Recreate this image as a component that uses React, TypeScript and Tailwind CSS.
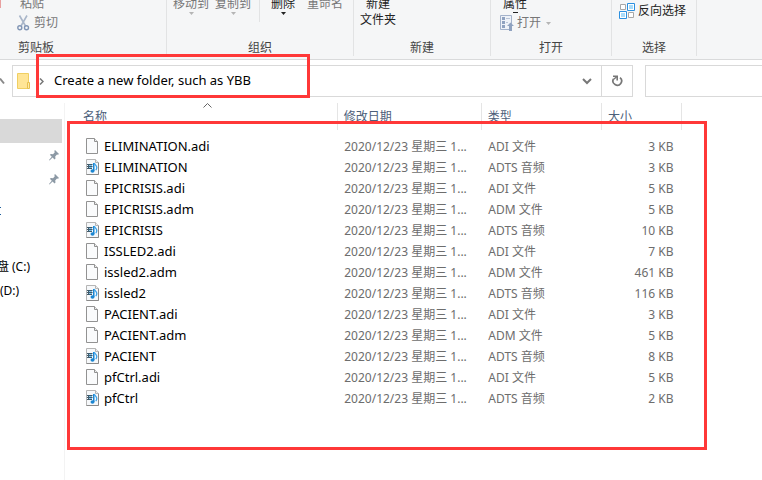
const base = "font-['Noto_Sans','Noto_Sans_CJK_SC',sans-serif]"

interface FileRow {
  name: string
  type: string
  size: string
}

const files: FileRow[] = [
  { name: "ELIMINATION.adi", type: "ADI 文件", size: "3 KB" },
  { name: "ELIMINATION", type: "ADTS 音频", size: "3 KB" },
  { name: "EPICRISIS.adi", type: "ADI 文件", size: "5 KB" },
  { name: "EPICRISIS.adm", type: "ADM 文件", size: "5 KB" },
  { name: "EPICRISIS", type: "ADTS 音频", size: "10 KB" },
  { name: "ISSLED2.adi", type: "ADI 文件", size: "7 KB" },
  { name: "issled2.adm", type: "ADM 文件", size: "461 KB" },
  { name: "issled2", type: "ADTS 音频", size: "116 KB" },
  { name: "PACIENT.adi", type: "ADI 文件", size: "3 KB" },
  { name: "PACIENT.adm", type: "ADM 文件", size: "5 KB" },
  { name: "PACIENT", type: "ADTS 音频", size: "8 KB" },
  { name: "pfCtrl.adi", type: "ADI 文件", size: "5 KB" },
  { name: "pfCtrl", type: "ADTS 音频", size: "2 KB" },
]

function PageIcon() {
  return (
    <svg className="shrink-0" width="14" height="16" viewBox="0 0 14 16" fill="none">
      <path d="M.5.5h8l3 3v12H.5z" fill="#fafbfc" stroke="#929292" />
      <path d="M8.500.5v3h3" fill="#eee" stroke="#929292" />
    </svg>
  )
}

function AudioIcon() {
  return (
    <svg className="shrink-0" width="14" height="16" viewBox="0 0 14 16" fill="none">
      <path d="M.5.5h9l3 3v12H.5z" fill="#f6f8fa" stroke="#b5b5b5" />
      <path d="M12.500 3.500v12H.5" stroke="#8a8a8a" />
      <path d="M9.500.5v3h3" fill="#eee" stroke="#b5b5b5" />
      <path d="M1 5h5.500v1H1zM1 7h5.500v1H1zM1 9h5v1H1zM2 5h1v5H2z" fill="#3f5a6b" />
      <path d="M3 6h3v1H3zM3 8h3v1H3z" fill="#7fc0e8" />
      <path d="M7 4h1.500v8H7z" fill="#1b86d1" />
      <path d="M8.200 4c.4 1.800 2.600 2.400 2.600 4.600 0 1-.4 1.900-1 2.600" stroke="#3ba3ea" strokeWidth="1.300" />
      <ellipse cx="6.500" cy="12" rx="2" ry="1.700" fill="#1b86d1" />
    </svg>
  )
}

function DownArrow({ color }: { color: string }) {
  return (
    <svg width="5" height="3" viewBox="0 0 5 3">
      <path d="M0 0h5L2.500 3z" fill={color} />
    </svg>
  )
}

function ScissorsIcon() {
  return (
    <svg width="13" height="16" viewBox="0 0 13 16" fill="none">
      <path d="M2.500.5 8.500 11M10 .5 4 11" stroke="#a9b6c9" strokeWidth="1.600" />
      <circle cx="2.800" cy="12.800" r="2" stroke="#8095b5" strokeWidth="1.400" />
      <circle cx="9.500" cy="12.800" r="2" stroke="#8095b5" strokeWidth="1.400" />
    </svg>
  )
}

function OpenIcon() {
  return (
    <svg width="14" height="16" viewBox="0 0 14 16" fill="none">
      <path d="M.5.5h11v14H.5z" fill="#eef2f8" stroke="#a3b2cb" />
      <path d="M2 2h3v3H2zM2 6h3v3H2zM2 10h3v3H2z" fill="#8fa2c0" />
      <path d="M6 3.500h4M6 7.500h2" stroke="#b9c5d8" />
      <path d="M10.500 7.500 14 11h-2v5H9v-5H7z" fill="#8fa2c0" />
    </svg>
  )
}

function InvertIcon() {
  return (
    <svg width="16" height="16" viewBox="0 0 16 16" fill="none">
      <path d="M1.500 1.500h5v5h-5zM9.500 9.500h5v5h-5z" fill="#fff" stroke="#a8a8a8" />
      <path d="M8.500.5h7v7h-7zM.5 8.500h7v7h-7z" fill="#fff" stroke="#2b90e0" />
      <path d="M10 2h4v4h-4zM2 10h4v4H2z" fill="#a9dcfa" />
    </svg>
  )
}

function PinIcon() {
  return (
    <svg width="10" height="11" viewBox="0 0 10 11">
      <path d="m6 0 4 4-1 .8-1-.2-1.800 2 .3 2L5.500 9.500 3.600 7.500.5 10.500 0 10 2.800 6.700.8 4.800 2 4l2 .2L5.800 2.300 5.300 1z" fill="#8c99a5" />
    </svg>
  )
}

interface GroupProps {
  label: string
  className: string
  children: React.ReactNode
}

function RibbonGroup({ label, className, children }: GroupProps) {
  return (
    <section className={`flex shrink-0 flex-col border-r border-[#e2e3e4] ${className}`}>
      <div className="flex flex-1 items-start">{children}</div>
      <h2 className="text-center text-[#444]">{label}</h2>
    </section>
  )
}

function Ribbon() {
  return (
    <div className="overflow-hidden border-b border-[#d9dadb] bg-[#f5f6f7] pb-[3px]">
      <div className="-mt-1 flex h-15 leading-4 whitespace-nowrap text-[#222]">
        <section className="flex w-[167px] shrink-0 flex-col border-r border-[#e2e3e4]">
          <div className="flex flex-1 items-start gap-4">
            <span className="h-3 w-px bg-[#e8a0a0]" />
            <div className="flex flex-col items-start text-[#777]">
              <button className="ml-[3px] h-4">粘贴</button>
              <button className="mt-[3px] flex h-4 items-center gap-1">
                <ScissorsIcon />
                剪切
              </button>
            </div>
          </div>
          <h2 className="pl-[18px] text-[#444]">剪贴板</h2>
        </section>
        <RibbonGroup label="组织" className="w-[187px]">
          <div className="flex items-start gap-[6px] pl-[6px] text-[#777]">
            <button className="flex flex-col items-center">
              移动到
              <DownArrow color="#b5b5b5" />
            </button>
            <button className="flex flex-col items-center">
              复制到
              <DownArrow color="#b5b5b5" />
            </button>
            <span className="ml-[2px] h-[26px] w-px bg-[#e2e3e4]" />
            <button className="ml-[5px] flex flex-col items-center text-[#222]">
              删除
              <DownArrow color="#222" />
            </button>
            <button className="ml-[6px]">重命名</button>
          </div>
        </RibbonGroup>
        <RibbonGroup label="新建" className="w-[137px]">
          <button className="ml-[6px] h-8 leading-4">
            新建
            <br />
            文件夹
          </button>
        </RibbonGroup>
        <RibbonGroup label="打开" className="w-[121px]">
          <div className="ml-[9px] flex flex-col items-start">
            <button className="ml-[3px] flex h-4 flex-col items-center">
              属性
              <span className="h-px w-[5px] shrink-0 bg-[#222]" />
            </button>
            <button className="mt-[3px] flex h-4 items-center gap-[3px] text-[#777]">
              <OpenIcon />
              打开
              <span className="pl-[2px]">
                <DownArrow color="#b5b5b5" />
              </span>
            </button>
          </div>
        </RibbonGroup>
        <RibbonGroup label="选择" className="w-[85px]">
          <button className="mt-[7px] ml-[7px] flex h-4 items-center gap-[3px]">
            <InvertIcon />
            反向选择
          </button>
        </RibbonGroup>
      </div>
    </div>
  )
}

function AddressBar() {
  return (
    <div className="flex h-[43px] items-start pt-[5px]">
      <button aria-label="Up" className="flex h-8 w-3 items-center">
        <svg width="5" height="8" viewBox="0 0 5 8" fill="none">
          <path d="M0 1.500 4 6.500" stroke="#888" strokeWidth="2" />
        </svg>
      </button>
      <div className="relative flex h-8 min-w-0 flex-1 items-center border border-[#d9d9d9]">
        <svg className="ml-1 shrink-0" width="14" height="16" viewBox="0 0 14 16">
          <path d="M.5.5h11v15H.5z" fill="#ffe596" stroke="#f0cf62" />
          <path d="M10.500 9.500h2v6h-2z" fill="#ffe9a6" stroke="#e6c04f" />
        </svg>
        <svg className="ml-2 shrink-0" width="5" height="7" viewBox="0 0 5 7" fill="none">
          <path d="m1 .5 3 3-3 3" stroke="#777" strokeWidth="1.500" />
        </svg>
        <input
          aria-label="Address"
          defaultValue="Create a new folder, such as YBB"
          className="ml-[10px] h-6 min-w-0 flex-1 pb-[3px] text-[13px] text-black outline-none"
        />
        <button aria-label="Previous locations" className="flex w-7 justify-center">
          <svg width="10" height="7" viewBox="0 0 10 7" fill="none">
            <path d="m1 1 4 4 4-4" stroke="#777" strokeWidth="2" />
          </svg>
        </button>
        {/* Highlight frame */}
        <div className="pointer-events-none absolute -top-3 left-[23px] h-11 w-[274px] border-3 border-[#ff3838]" />
      </div>
      <button aria-label="Refresh" className="flex h-8 w-[31px] items-center justify-center border border-l-0 border-[#d9d9d9]">
        <svg width="12" height="12" viewBox="0 0 12 12" fill="none">
          <path d="M9 2.600A4.300 4.300 0 1 1 2.400 4" stroke="#777" strokeWidth="1.700" />
          <path d="M2 1.300h4.200v4.200" stroke="#777" strokeWidth="1.600" />
          <path d="M2.400 4.500 6 1.500" stroke="#777" strokeWidth="1.400" />
        </svg>
      </button>
      <input aria-label="Search" className="ml-3 h-8 w-[117px] border border-r-0 border-[#d9d9d9] outline-none" />
    </div>
  )
}

function NavPane() {
  return (
    <nav className="flex w-16 shrink-0 flex-col pt-4 pr-[2px] leading-6 whitespace-nowrap text-black">
      <a href="#quick" aria-label="Quick access" className="h-6 bg-[#d9d9d9]" />
      <a href="#pinned-1" aria-label="Pinned folder" className="flex h-6 items-center justify-end pr-[3px]">
        <PinIcon />
      </a>
      <a href="#pinned-2" aria-label="Pinned folder" className="flex h-6 items-center justify-end pr-[3px]">
        <PinIcon />
      </a>
      <a href="#folder" aria-label="Folder" className="mt-2 flex h-6 items-center">
        <svg width="2" height="8" viewBox="0 0 2 8">
          <path d="M0 0h1v1H0zM0 7h1v1H0z" fill="#1f5f9c" />
        </svg>
      </a>
      <div className="mt-8 flex flex-col">
        <a href="#c" className="flex h-6 justify-end overflow-hidden pr-8">盘 (C:)</a>
        <a href="#d" className="h-6">(D:)</a>
      </div>
    </nav>
  )
}

function FileTable() {
  return (
    <table className="w-[617px] table-fixed border-collapse text-left leading-5 whitespace-nowrap">
      <thead>
        <tr className="h-[27px] text-[#4c607a]">
          <th className="relative w-[272px] border-r border-[#e5e5e5] pl-[18px] font-normal">
            名称
            <svg className="absolute top-0 left-[138px]" width="9" height="5" viewBox="0 0 9 5" fill="none">
              <path d="m.5 4.500 4-4 4 4" stroke="#666" />
            </svg>
          </th>
          <th className="w-36 border-r border-[#e5e5e5] pl-[6px] font-normal">修改日期</th>
          <th className="w-[120px] border-r border-[#e5e5e5] pl-[6px] font-normal">类型</th>
          <th className="w-20 border-r border-[#e5e5e5] pl-[6px] font-normal">大小</th>
        </tr>
      </thead>
      <tbody className="text-[#6d6d6d] before:block before:h-[6px]">
        {files.map((file) => (
          <tr key={file.name} className="h-[21px]">
            <td className="p-0 pl-[21px]">
              <div className="flex items-center gap-1 pb-px text-[13px] text-black">
                {file.type.startsWith("ADTS") ? <AudioIcon /> : <PageIcon />}
                <span>{file.name}</span>
              </div>
            </td>
            <td className="p-0 pl-[7px]">2020/12/23 星期三 1...</td>
            <td className="p-0 pl-[7px]">{file.type}</td>
            <td className="p-0 pr-2 text-right">{file.size}</td>
          </tr>
        ))}
      </tbody>
    </table>
  )
}

export default function App() {
  return (
    <div className={`${base} flex min-h-screen flex-col overflow-hidden bg-white text-[12px]`}>
      <Ribbon />
      <AddressBar />
      <div className="flex flex-1">
        <NavPane />
        <main className="relative min-w-0 flex-1 border-l border-[#f3f3f3]">
          <FileTable />
          <div className="pointer-events-none absolute top-[18px] left-[2px] h-[329px] w-[640px] border-3 border-[#ff3838]" />
        </main>
      </div>
    </div>
  )
}
